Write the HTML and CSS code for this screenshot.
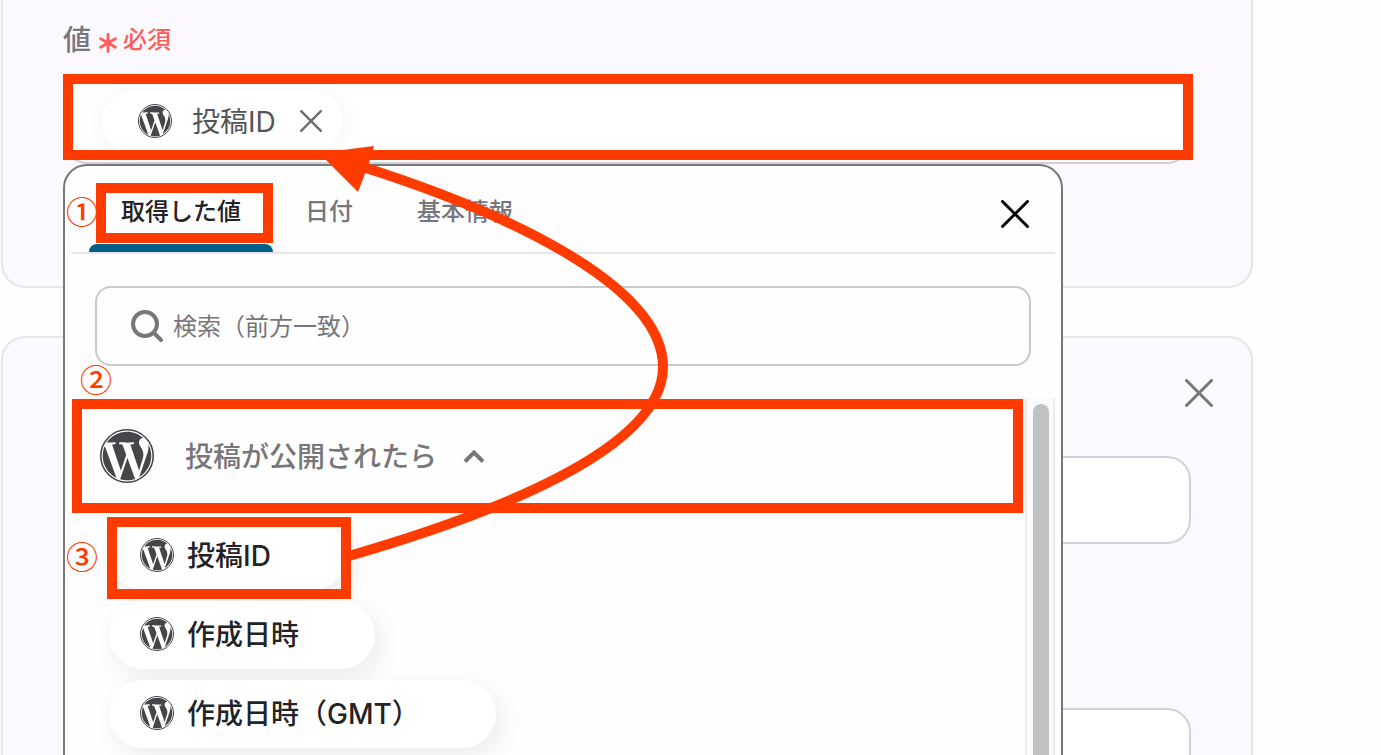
FILE: index.html
```html
<!DOCTYPE html>
<html lang="ja">
<head>
<meta charset="utf-8">
<meta name="viewport" content="width=device-width, initial-scale=1">
<title>値の設定</title>
<link rel="stylesheet" href="styles.css">
</head>
<body>
<svg class="defs" aria-hidden="true">
  <symbol id="wp" viewBox="0 0 24 24">
    <circle cx="12" cy="12" r="11.65" fill="none" stroke="currentColor" stroke-width=".7"/>
    <path fill="currentColor" d="M21.469 6.825c.84 1.537 1.318 3.3 1.318 5.175 0 3.979-2.156 7.456-5.363 9.325l3.295-9.527c.615-1.54.82-2.771.82-3.864 0-.405-.026-.78-.07-1.11m-7.981.105c.647-.03 1.232-.105 1.232-.105.582-.075.514-.93-.067-.899 0 0-1.755.135-2.88.135-1.064 0-2.85-.15-2.85-.15-.585-.03-.661.855-.075.885 0 0 .54.061 1.125.09l1.68 4.605-2.37 7.08L5.354 6.9c.649-.03 1.234-.1 1.234-.1.585-.075.516-.93-.065-.896 0 0-1.746.138-2.874.138-.2 0-.438-.008-.69-.015C4.911 3.15 8.235 1.215 12 1.215c2.809 0 5.365 1.072 7.286 2.833-.046-.003-.091-.009-.141-.009-1.06 0-1.812.923-1.812 1.914 0 .89.513 1.643 1.06 2.531.411.72.89 1.643.89 2.977 0 .915-.354 1.994-.821 3.479l-1.075 3.585-3.9-11.61.001.014zM12 22.784c-1.059 0-2.081-.153-3.048-.437l3.237-9.406 3.315 9.087c.024.053.05.101.078.149-1.12.393-2.325.609-3.582.609M1.211 12c0-1.564.336-3.05.935-4.39L7.29 21.709C3.694 19.96 1.212 16.271 1.211 12"/>
  </symbol>
  <symbol id="cross" viewBox="0 0 28 28">
    <path d="M1.5 1.5l25 25M26.5 1.5l-25 25" fill="none" stroke="currentColor" stroke-width="3" stroke-linecap="round"/>
  </symbol>
</svg>
<main class="page">
  <section class="card card-value">
    <div class="field-label">
      <span class="name">値</span>
      <span class="required">
        <svg class="asterisk" viewBox="0 0 18 20" aria-hidden="true"><path d="M9 1.5v17M1.6 5.7l14.8 8.6M16.4 5.7L1.6 14.3" fill="none" stroke="currentColor" stroke-width="2.8" stroke-linecap="round"/></svg>
        必須
      </span>
    </div>
    <div class="field-wrap">
      <div class="field">
        <span class="token">
          <svg class="wp-small"><use href="#wp"/></svg>
          <span>投稿ID</span>
          <button class="icon-button" type="button" aria-label="削除"><svg class="cross-small"><use href="#cross"/></svg></button>
        </span>
      </div>

      <div class="popup">
        <div class="tabs" role="tablist">
          <button class="tab active" type="button" role="tab" aria-selected="true">取得した値<span class="mark mark-tab"></span></button>
          <button class="tab" type="button" role="tab">日付</button>
          <button class="tab" type="button" role="tab">基本情報</button>
          <button class="icon-button popup-close" type="button" aria-label="閉じる"><svg class="cross"><use href="#cross"/></svg></button>
        </div>
        <label class="search">
          <svg class="lens" viewBox="0 0 32 32" aria-hidden="true"><circle cx="14" cy="14" r="12" fill="none" stroke="currentColor" stroke-width="4"/><path d="M23 23l7 7" stroke="currentColor" stroke-width="4" stroke-linecap="round"/></svg>
          <input type="text" placeholder="検索（前方一致）" aria-label="検索">
        </label>
        <div class="results">
          <div class="list">
            <button class="group" type="button" aria-expanded="true">
              <svg class="wp-large"><use href="#wp"/></svg>
              <span class="text">投稿が公開されたら</span>
              <svg class="chevron" viewBox="0 0 22 14" aria-hidden="true"><path d="M2 12.5l9-9 9 9" fill="none" stroke="currentColor" stroke-width="4"/></svg>
              <span class="mark mark-group"></span>
            </button>
            <div class="chips">
              <button class="chip" type="button"><svg class="wp-small"><use href="#wp"/></svg><span class="text">投稿ID</span><span class="mark mark-chip"></span></button>
              <button class="chip" type="button"><svg class="wp-small"><use href="#wp"/></svg><span class="text">作成日時</span></button>
              <button class="chip" type="button"><svg class="wp-small"><use href="#wp"/></svg><span class="text">作成日時（GMT）</span></button>
            </div>
          </div>
          <div class="scrollbar"><div class="thumb"></div></div>
        </div>
      </div>

      <span class="mark mark-field"></span>
      <span class="step step-1">①</span>
      <span class="step step-2">②</span>
      <span class="step step-3">③</span>
      <svg class="arrow" viewBox="0 0 620 500" aria-hidden="true">
        <path d="M286 480C427 439 600 374 600 291C600 213 457 141 300 91" fill="none" stroke="currentColor" stroke-width="10"/>
        <path d="M256 77L311 70L305 90L295 116Z" fill="currentColor"/>
      </svg>
    </div>
  </section>

  <section class="card card-next">
    <div class="card-head">
      <button class="icon-button" type="button" aria-label="削除"><svg class="cross"><use href="#cross"/></svg></button>
    </div>
    <input class="field" type="text" aria-label="項目1">
    <input class="field" type="text" aria-label="項目2">
  </section>
</main>
</body>
</html>
```
FILE: styles.css
```css
:root {
  --mark: #ff3b00;
  --gray: #77767a;
  --ink: #232226;
}

* {
  box-sizing: border-box;
}

body {
  margin: 0;
  height: 100vh;
  overflow: hidden;
  background: #fefefe;
  color: var(--gray);
  font-family: Inter, "Noto Sans CJK JP", sans-serif;
  font-size: 28px;
  font-weight: 500;
}

button,
input {
  font: inherit;
  color: inherit;
}

button {
  border: 0;
  padding: 0;
  background: none;
}

svg {
  display: block;
  flex: none;
}

.defs {
  position: absolute;
  width: 0;
  height: 0;
}

.page {
  display: flex;
  flex-direction: column;
  gap: 48px;
  padding: 0 128px 0 1px;
  height: 100%;
  overflow: hidden;
}

.card {
  flex: none;
  border: 2px solid #e6e5e8;
  border-radius: 24px;
  background: #fbf9fd;
  padding: 0 60px 122px;
}

.card-value {
  border-top: 0;
  border-radius: 0 0 24px 24px;
  padding-top: 20px;
}

.field-label {
  display: flex;
  align-items: center;
  gap: 8px;
  margin-bottom: 16px;
  line-height: 40px;
}

.required {
  display: flex;
  align-items: center;
  gap: 6px;
  color: #ff5c5a;
  font-size: 24px;
}

.asterisk {
  width: 18px;
  height: 20px;
  margin-top: 6px;
}

.field-wrap {
  position: relative;
}

.field {
  display: flex;
  width: 100%;
  height: 88px;
  padding: 12px 37px;
  border: 2px solid #d2d1d9;
  border-radius: 24px;
  background: #fff;
}

.token {
  display: flex;
  align-items: center;
  gap: 20px;
  height: 62px;
  padding: 0 20px 0 36px;
  border-radius: 32px;
  background: #fff;
  box-shadow: 0 4px 24px rgba(60, 50, 80, .06);
  color: #555458;
  font-weight: 400;
}

.token .icon-button {
  margin-left: 4px;
  color: #6c6b6f;
}

.token span {
  padding-bottom: 2px;
}

.wp-small {
  width: 34px;
  height: 34px;
  color: #464549;
}

.wp-large {
  width: 54px;
  height: 54px;
  color: #464549;
}

.cross {
  width: 28px;
  height: 28px;
}

.cross-small {
  width: 22px;
  height: 22px;
}

.popup {
  position: absolute;
  z-index: 1;
  top: 88px;
  left: 0;
  right: 128px;
  border: 2px solid var(--gray);
  border-radius: 24px;
  background: #fefefe;
}

.tabs {
  display: flex;
  margin: 0 6px;
  padding-left: 18px;
  border-bottom: 2px solid #e6e5e8;
}

.tab {
  position: relative;
  height: 86px;
  padding: 0 32px;
  font-size: 24px;
}

.tab.active {
  color: var(--ink);
}

.tab.active::after {
  content: "";
  position: absolute;
  left: 0;
  right: 0;
  bottom: 0;
  height: 8px;
  border-radius: 8px 8px 0 0;
  background: #005f86;
}

.popup-close {
  margin: 10px 26px 0 auto;
  color: #000;
}

.search {
  display: flex;
  align-items: center;
  gap: 10px;
  height: 80px;
  margin: 32px 30px;
  padding: 0 34px;
  border: 2px solid #c9c8cb;
  border-radius: 16px;
}

.lens {
  width: 32px;
  height: 32px;
}

.search input {
  flex: 1;
  min-width: 0;
  padding: 0;
  border: 0;
  outline: 0;
  background: none;
  font-size: 24px;
  font-weight: 400;
}

.search input::placeholder {
  color: var(--gray);
  opacity: 1;
}

.results {
  display: flex;
  padding: 0 6px;
}

.list {
  flex: 1;
  padding-bottom: 80px;
}

.group {
  position: relative;
  display: flex;
  align-items: center;
  width: 100%;
  height: 116px;
  padding-left: 29px;
  text-align: left;
}

.text {
  padding-bottom: 2px;
}

.group .text {
  margin-left: 31px;
}

.chevron {
  width: 22px;
  height: 14px;
  margin-left: 26px;
}

.chips {
  display: flex;
  flex-direction: column;
  align-items: flex-start;
  gap: 11px;
  padding: 8px 0 0 38px;
}

.chip {
  position: relative;
  display: flex;
  align-items: center;
  gap: 13px;
  height: 68px;
  padding: 0 76px 2px 31px;
  border-radius: 34px;
  background: #fff;
  box-shadow: 6px 8px 24px rgba(40, 30, 50, .08);
  color: var(--ink);
}

.scrollbar {
  width: 30px;
  padding: 6px 4px 0 6px;
  border: solid #ecebed;
  border-width: 0 2px;
  background: #fbfafc;
}

.thumb {
  width: 16px;
  height: 100%;
  border-radius: 8px;
  background: #c2c0c3;
}

/* Annotation layer */
.mark {
  position: absolute;
  border: 10px solid var(--mark);
  pointer-events: none;
}

.mark-field {
  z-index: 2;
  inset: -2px -2px 4px 0;
}

.mark-tab {
  inset: 17px 0 9px 7px;
}

.mark-group {
  inset: 1px 2px 1px 1px;
}

.mark-chip {
  inset: -5px -4px -9px -2px;
}

.step {
  position: absolute;
  z-index: 2;
  color: var(--mark);
  font-family: "Noto Sans CJK JP", sans-serif;
  font-size: 32px;
  font-weight: 500;
  line-height: 32px;
}

.step-1 {
  top: 118px;
  left: 3px;
}

.step-2 {
  top: 286px;
  left: 17px;
}

.step-3 {
  top: 463px;
  left: 3px;
}

.arrow {
  position: absolute;
  z-index: 2;
  top: 0;
  left: 0;
  width: 620px;
  height: 500px;
  color: var(--mark);
  pointer-events: none;
}

.card-next {
  display: flex;
  flex-direction: column;
  gap: 164px;
}

.card-next .field {
  flex: none;
}

.card-head {
  display: flex;
  justify-content: flex-end;
  height: 118px;
  margin: 0 -22px -164px 0;
  padding-top: 41px;
}

.card-head .icon-button {
  height: 28px;
}
```
